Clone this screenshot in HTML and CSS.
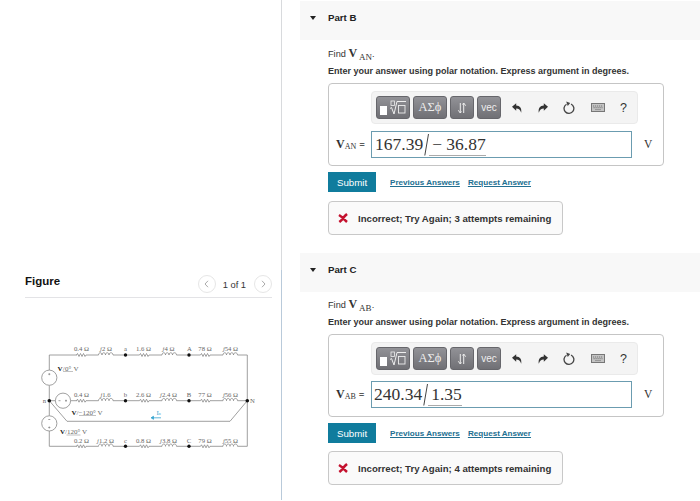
FILE: index.html
```
<!DOCTYPE html>
<html lang="en">
<head>
    <meta charset="UTF-8">
    <meta name="viewport" content="width=device-width, initial-scale=1.0">
    <title>Three-Phase Circuit</title>
    <link rel="stylesheet" href="styles.css">
</head>
<body>

<!-- shared icons -->
<svg class="icon-defs">
    <symbol id="templates" viewBox="0 0 26 16">
        <rect x="0" y="6" width="7" height="9" fill="#fff"/>
        <path d="M10 8.500l1.500-1 2.500 6.500 3-12.500h9" fill="none" stroke="#eee" stroke-width="1"/>
        <rect x="11" y="1" width="3.500" height="4.500" fill="none" stroke="#eee" stroke-width=".8"/>
        <rect x="18.500" y="5.500" width="6.500" height="7.500" fill="none" stroke="#eee" stroke-width=".9"/>
    </symbol>
    <symbol id="updown" viewBox="0 0 10 12">
        <path d="M3.300 1v10M1.300 8.300L3.300 11l1.200-1.500M6.700 11V1M5.500 2.500L6.700 1l2 2.700" fill="none" stroke="#eee" stroke-width="1"/>
    </symbol>
    <symbol id="undo" viewBox="0 0 10 10">
        <path d="M0 3.800L4.200.2v2.200c3.800.2 5.700 2.600 5 7.300C8.100 6.900 7 5.700 4.200 5.600v2.200z" fill="#333"/>
    </symbol>
    <symbol id="redo" viewBox="0 0 10 10">
        <path d="M10 3.800L5.800.2v2.200C2 2.600.1 5 .8 9.700 1.900 6.900 3 5.700 5.800 5.600v2.200z" fill="#333"/>
    </symbol>
    <symbol id="reset" viewBox="0 0 12 13">
        <path d="M8 3A4.900 4.900 0 1 1 3.500 3.200" fill="none" stroke="#444" stroke-width="1.300"/>
        <path d="M3.200.6l4 1.400-2.500 3z" fill="#444"/>
    </symbol>
    <symbol id="keyboard" viewBox="0 0 14 9">
        <rect x=".5" y=".5" width="13" height="8" fill="#c4c4c4" stroke="#777"/>
        <path d="M2 3h10M2.500 4.700h9" stroke="#777" stroke-width="1" stroke-dasharray="1.200 .8"/>
        <path d="M4 6.600h6" stroke="#888" stroke-width=".8"/>
    </symbol>
    <symbol id="cross" viewBox="0 0 10 10">
        <path d="M1 2Q3.500 3.500 5 5.200T9 9M9 1Q6.500 3 5 5.200T1.300 9" fill="none" stroke="#c4122f" stroke-width="2.600"/>
    </symbol>
</svg>

<div class="figure-pane">
    <div class="figure-header">
        <h2>Figure</h2>
        <div class="pager">
            <button class="pager-btn"><svg width="5" height="8" viewBox="0 0 5 8"><path d="M4 .8L1 4l3 3.200"/></svg></button>
            <span>1 of 1</span>
            <button class="pager-btn"><svg width="5" height="8" viewBox="0 0 5 8"><path d="M1 .8L4 4 1 7.200"/></svg></button>
        </div>
    </div>

    <svg class="circuit" width="230" height="120" viewBox="35 335 230 120">
        <defs>
            <!-- one phase: line, load and their impedances -->
            <g id="phase">
                <path d="M76.500 0l1-1.500 1.500 3 1.500-3 1.500 3 1.500-3 1.500 3 1-1.500h12.500c0-3 3.500-3 3.500 0 0-3 3.500-3 3.500 0 0-3 3.500-3 3.500 0 0-3 4-3 4 0h26.500l1-1.500 1.500 3 1.500-3 1.500 3 1.500-3 1.500 3 1-1.500h13c0-3 3.500-3 3.500 0 0-3 3.500-3 3.500 0 0-3 3.500-3 3.500 0 0-3 4-3 4 0H200.500l1-1.500 1.500 3 1.500-3 1.500 3 1.500-3 1.500 3 1-1.500h13c0-3 3.500-3 3.500 0 0-3 3.500-3 3.500 0 0-3 3.500-3 3.500 0 0-3 4-3 4 0H247.300"/>
                <circle class="node" cx="125.500" cy="0" r="1.700"/>
                <circle class="node" cx="189" cy="0" r="1.700"/>
            </g>
        </defs>
        <g class="wires">
            <path d="M49.300 370V355H77M49.300 385.500v30.200M49.300 431v15.300H77M49.300 400.700h6M70.700 400.700H77M49.300 400.700L67 421.300h163l17.300-20.600M247.300 355v91.300"/>
            <circle cx="49.300" cy="377.700" r="7.600"/>
            <circle cx="63" cy="400.700" r="7.600"/>
            <circle cx="49.300" cy="423.400" r="7.600"/>
            <use href="#phase" y="355"/>
            <use href="#phase" y="400.700"/>
            <use href="#phase" y="446.300"/>
            <circle class="node" cx="49.300" cy="400.700" r="1.800"/>
            <circle class="node" cx="247.300" cy="400.700" r="1.800"/>
            <path d="M48.300 374.200h2M49.300 373.200v2M58.500 400.700h2M65 400.700h2M66 399.700v2M48.300 427.500h2M49.300 426.500v2M48.300 419.500h2"/>
        </g>
        <g class="labels">
            <text x="81.500" y="351">0.4 Ω</text>
            <text x="106" y="351"><tspan class="j">j</tspan>2 Ω</text>
            <text x="125.500" y="351">a</text>
            <text x="143.500" y="351">1.6 Ω</text>
            <text x="168.500" y="351"><tspan class="j">j</tspan>4 Ω</text>
            <text x="189.500" y="351">A</text>
            <text x="205" y="351">78 Ω</text>
            <text x="230.500" y="351"><tspan class="j">j</tspan>54 Ω</text>

            <text x="81.500" y="397">0.4 Ω</text>
            <text x="105.500" y="397"><tspan class="j">j</tspan>1.6</text>
            <text x="125.500" y="397">b</text>
            <text x="143.500" y="397">2.6 Ω</text>
            <text x="168.500" y="397"><tspan class="j">j</tspan>2.4 Ω</text>
            <text x="189" y="397">B</text>
            <text x="205" y="397">77 Ω</text>
            <text x="230.500" y="397"><tspan class="j">j</tspan>56 Ω</text>

            <text x="81.500" y="442.500">0.2 Ω</text>
            <text x="105.500" y="442.500"><tspan class="j">j</tspan>1.2 Ω</text>
            <text x="125.500" y="442.500">c</text>
            <text x="143.500" y="442.500">0.8 Ω</text>
            <text x="168.500" y="442.500"><tspan class="j">j</tspan>3.8 Ω</text>
            <text x="189" y="442.500">C</text>
            <text x="205" y="442.500">79 Ω</text>
            <text x="230.500" y="442.500"><tspan class="j">j</tspan>55 Ω</text>

            <text x="44.500" y="402.500">n</text>
            <text x="252.500" y="403">N</text>
        </g>
        <g class="sources">
            <text x="57.500" y="370.500" textLength="21"><tspan class="bold">V</tspan>/0° V</text>
            <text x="71.500" y="414.500" textLength="31"><tspan class="bold">V</tspan>/−120° V</text>
            <text x="60" y="434" textLength="27"><tspan class="bold">V</tspan>/120° V</text>
            <path d="M63 371.500h10M79 415.500h17M66.500 435h14"/>
        </g>
        <g class="current">
            <text x="156.500" y="415">I<tspan class="tiny">n</tspan></text>
            <path d="M152 417.800h9M151 417.800l2.500-1.500v3z"/>
        </g>
    </svg>
</div>

<div class="parts">
    <section class="part">
        <div class="part-header"><span class="caret"></span><h3>Part B</h3></div>
        <div class="part-body">
            <p class="question">Find <span class="math"><b>V</b><sub>AN</sub></span>.</p>
            <p class="instructions">Enter your answer using polar notation. Express argument in degrees.</p>
            <div class="answer-box">
                <div class="toolbar">
                    <button class="tool wide"><svg width="26" height="16"><use href="#templates"/></svg></button>
                    <button class="tool wide greek">ΑΣϕ</button>
                    <button class="tool"><svg width="10" height="12"><use href="#updown"/></svg></button>
                    <button class="tool">vec</button>
                    <div class="plain-tools">
                        <svg width="10" height="10"><use href="#undo"/></svg>
                        <svg width="10" height="10"><use href="#redo"/></svg>
                        <svg width="12" height="13"><use href="#reset"/></svg>
                        <svg width="14" height="9"><use href="#keyboard"/></svg>
                        <span class="help">?</span>
                    </div>
                </div>
                <div class="answer-row">
                    <span class="label math"><b>V</b><sub>AN</sub> <i>=</i></span>
                    <div class="answer-input">167.39<svg class="slash" width="5" height="23"><path d="M4.500 1L.8 22.500"/></svg><span class="angle">− 36.87</span></div>
                    <span class="unit">V</span>
                </div>
            </div>
            <div class="actions">
                <button class="submit">Submit</button>
                <a href="#">Previous Answers</a>
                <a href="#">Request Answer</a>
            </div>
            <div class="feedback"><svg width="10" height="10"><use href="#cross"/></svg><span>Incorrect; Try Again; 3 attempts remaining</span></div>
        </div>
    </section>

    <section class="part part-c">
        <div class="part-header"><span class="caret"></span><h3>Part C</h3></div>
        <div class="part-body">
            <p class="question">Find <span class="math"><b>V</b><sub>AB</sub></span>.</p>
            <p class="instructions">Enter your answer using polar notation. Express argument in degrees.</p>
            <div class="answer-box">
                <div class="toolbar">
                    <button class="tool wide"><svg width="26" height="16"><use href="#templates"/></svg></button>
                    <button class="tool wide greek">ΑΣϕ</button>
                    <button class="tool"><svg width="10" height="12"><use href="#updown"/></svg></button>
                    <button class="tool">vec</button>
                    <div class="plain-tools">
                        <svg width="10" height="10"><use href="#undo"/></svg>
                        <svg width="10" height="10"><use href="#redo"/></svg>
                        <svg width="12" height="13"><use href="#reset"/></svg>
                        <svg width="14" height="9"><use href="#keyboard"/></svg>
                        <span class="help">?</span>
                    </div>
                </div>
                <div class="answer-row">
                    <span class="label math"><b>V</b><sub>AB</sub> <i>=</i></span>
                    <div class="answer-input">240.34<svg class="slash" width="5" height="23"><path d="M4.500 1L.8 22.500"/></svg><span class="angle">1.35</span></div>
                    <span class="unit">V</span>
                </div>
            </div>
            <div class="actions">
                <button class="submit">Submit</button>
                <a href="#">Previous Answers</a>
                <a href="#">Request Answer</a>
            </div>
            <div class="feedback"><svg width="10" height="10"><use href="#cross"/></svg><span>Incorrect; Try Again; 4 attempts remaining</span></div>
        </div>
    </section>
</div>

</body>
</html>
```
FILE: styles.css
```
* {
    box-sizing: border-box;
}
body {
    margin: 0;
    height: 501px;
    display: flex;
    background: #fff;
    color: #333;
    font-family: "Liberation Sans", Arial, sans-serif;
    overflow: hidden;
}
h2, h3, p {
    margin: 0;
}
button {
    font-family: inherit;
    border: none;
    padding: 0;
}
.icon-defs {
    display: none;
}

/* left side */
.figure-pane {
    width: 282px;
    height: 500px;
    flex: none;
    padding: 270px 9px 0 25px;
    border-right: 1px solid #d0dae3;
    border-image: linear-gradient(#d8dadd 0 54%, #b9cada 54%) 1;
}
.figure-header {
    height: 28px;
    display: flex;
    justify-content: space-between;
    border-bottom: 1px solid #e3e3e6;
}
.figure-header h2 {
    font-size: 11.5px;
    line-height: 22px;
    color: #111;
}
.pager {
    display: flex;
    gap: 7px;
    height: 27px;
    align-items: center;
    font-size: 9.3px;
}
.pager span {
    padding: 3px 1px 0 0;
}
.pager-btn {
    width: 18px;
    height: 18px;
    border: 1px solid #e6e6e6;
    border-radius: 50%;
    background: #fff;
    display: flex;
    align-items: center;
    justify-content: center;
}
.pager-btn path {
    fill: none;
    stroke: #aaa;
}
.circuit {
    display: block;
    margin: 37px 0 0 10px;
    font-family: "Liberation Serif", serif;
    fill: #666;
}
.wires {
    fill: none;
    stroke: #888;
    stroke-width: .8;
}
.node {
    fill: #111;
    stroke: none;
}
.labels {
    font-size: 6.7px;
    text-anchor: middle;
}
.j {
    font-style: italic;
}
.sources {
    font-size: 7px;
}
.sources path {
    stroke: #999;
    stroke-width: .6;
}
.bold {
    font-weight: bold;
    fill: #222;
}
.current {
    font-size: 7px;
    fill: #3aa6d0;
}
.current path {
    stroke: #3aa6d0;
    stroke-width: .8;
}
.tiny {
    font-size: 4px;
}

/* right side */
.parts {
    flex: 1;
    padding: 1px 0 0 18px;
}
.part {
    height: 251px;
}
.part-header {
    height: 39px;
    padding: 0 0 6px 10px;
    background: #f8f8f8;
    display: flex;
    align-items: center;
}
.caret {
    border: 3.5px solid transparent;
    border-top: 4px solid #222;
    border-bottom: none;
    margin-right: 12px;
}
.part-header h3 {
    font-size: 9.7px;
    color: #222;
}
.part-body {
    padding: 5px 0 0 28px;
}
.question {
    height: 17px;
    line-height: 16px;
    font-size: 9.2px;
}
.math {
    font-family: "Liberation Serif", serif;
    font-size: 12px;
}
.math sub {
    font-size: 9px;
    line-height: 0;
    vertical-align: -3px;
    margin-left: 2px;
}
.instructions {
    height: 20px;
    line-height: 18px;
    font-size: 9px;
    font-weight: bold;
    white-space: nowrap;
}
.answer-box {
    width: 336px;
    height: 83px;
    margin-top: 1px;
    padding: 8px 0 0 7px;
    border: 1px solid #c5c5c5;
    border-radius: 4px;
}
.part-c .part-header {
    height: 40px;
    margin-bottom: -1px;
    border-top: 1px solid #fff;
}
.toolbar {
    width: 267px;
    height: 33px;
    margin: -1px 0 0 35px;
    padding: 0 4px;
    display: flex;
    align-items: center;
    gap: 3px;
    background: #f4f4f4;
    border: 1px solid #eaeaea;
    border-radius: 4px;
}
.tool {
    width: 24px;
    height: 23px;
    display: flex;
    align-items: center;
    justify-content: center;
    color: #eee;
    font-size: 10px;
    background: linear-gradient(#929297, #707075);
    border: 1px solid #66666b;
    border-radius: 3px;
}
.wide {
    width: 34px;
}
.greek {
    font-family: "Liberation Serif", serif;
    font-size: 12.5px;
}
.plain-tools {
    flex: 1;
    display: flex;
    align-items: center;
    justify-content: space-between;
    padding: 0 6px 0 8px;
}
.help {
    font-size: 12.5px;
}
.answer-row {
    display: flex;
    align-items: center;
    margin-top: 7px;
}
.part-c .answer-row {
    margin-top: 6px;
}
.label {
    width: 35px;
    font-size: 12px;
    line-height: 14px;
    white-space: nowrap;
}
.label sub {
    font-size: 8px;
    vertical-align: -1px;
    margin-left: 0;
}
.label i {
    font-size: 10px;
    font-style: normal;
    font-weight: bold;
}
.answer-input {
    width: 261px;
    height: 27px;
    padding-left: 3px;
    display: flex;
    align-items: center;
    border: 1px solid #6b9cb0;
    font-family: "Liberation Serif", serif;
    font-size: 17.5px;
}
.part-c .answer-input {
    padding-left: 2px;
}
.slash {
    margin-left: 1px;
    fill: none;
    stroke: #444;
}
.angle {
    height: 23px;
    line-height: 23px;
    padding-left: 3px;
    border-bottom: 1px solid #aaa;
}
.unit {
    margin-left: 12px;
    padding-bottom: 2px;
    font-family: "Liberation Serif", serif;
    font-size: 11.5px;
}
.actions {
    display: flex;
    align-items: center;
    margin-top: 6px;
    height: 20px;
}
.submit {
    width: 48px;
    height: 20px;
    margin-right: 6px;
    background: #107c9d;
    color: #fff;
    font-size: 9.7px;
}
.actions a {
    margin-left: 8px;
    color: #226f91;
    font-size: 8.1px;
    font-weight: bold;
}
.feedback {
    width: 235px;
    height: 34px;
    margin-top: 9px;
    padding-left: 9px;
    display: flex;
    align-items: center;
    gap: 10px;
    background: #fafafa;
    border: 1px solid #c8c8c8;
    border-radius: 4px;
    font-size: 9.65px;
    font-weight: bold;
    white-space: nowrap;
}
.part-c .feedback {
    margin-top: 8px;
}
```
